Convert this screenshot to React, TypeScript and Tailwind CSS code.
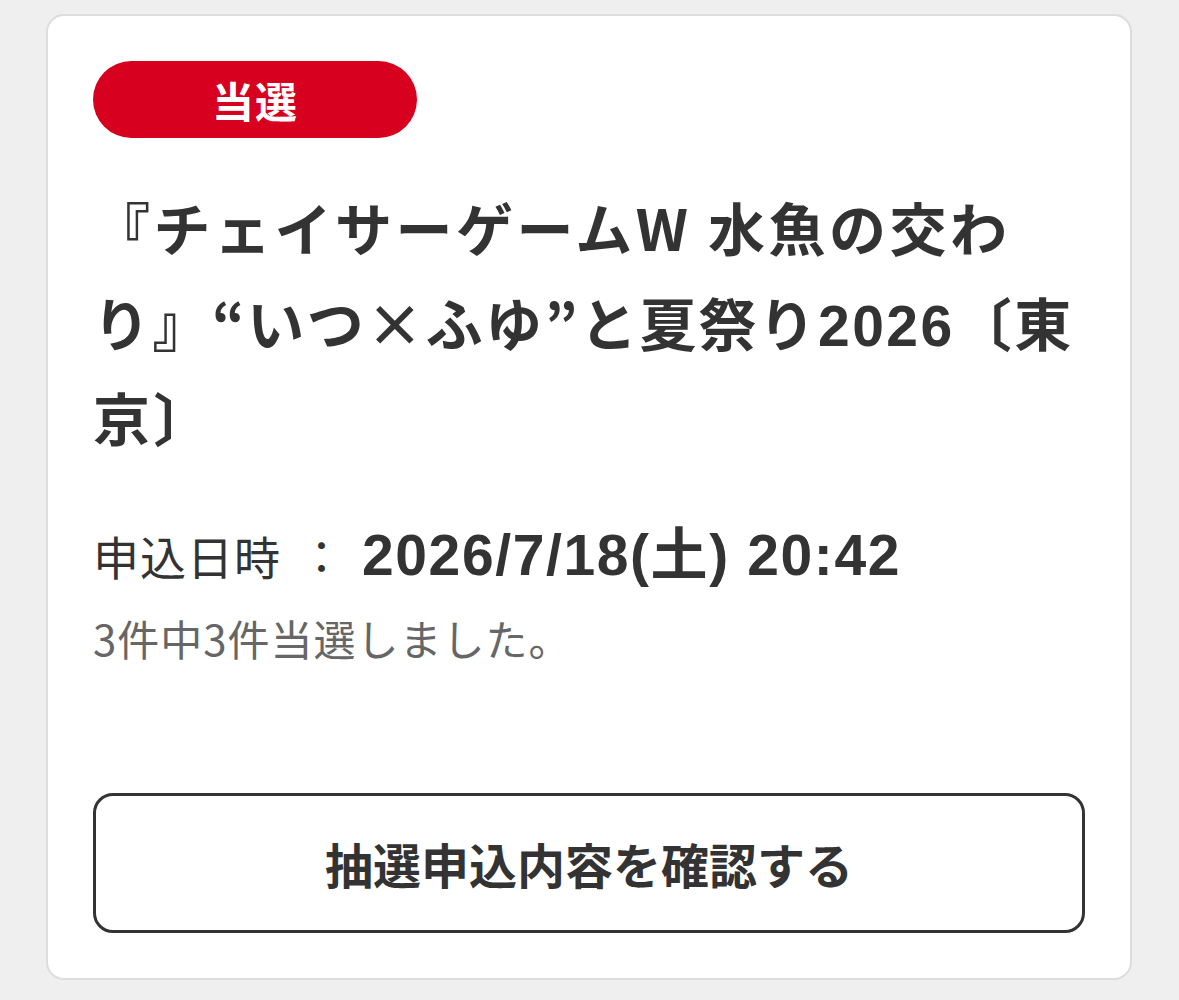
export default function App() {
  return (
    <div
      className="min-h-screen bg-[#efefef] px-[46px] pt-[14px] pb-[20px]"
      style={{ fontFamily: '"Noto Sans CJK JP", "Noto Sans", sans-serif' }}
    >
      {/* 当選カード */}
      <div className="w-[1086px] rounded-[18px] border-2 border-[#dddddd] bg-white px-[45px] pt-[45px] pb-[45px]">
        <div className="flex h-[77px] w-[324px] items-center justify-center rounded-full bg-[#d7001e]">
          <span className="text-[42px] font-bold leading-none tracking-[1px] text-white">当選</span>
        </div>

        <h2 className="mt-[41px] text-[57px] font-bold leading-[95px] tracking-[3.5px] text-[#333333]">
          『チェイサーゲームW 水魚の交わ
          <br />
          <span className="tracking-[2.5px]">
            り』“いつ×ふゆ”と夏祭り
            <span className="leading-none" style={{ fontFamily: '"Liberation Sans", sans-serif' }}>
              2026
            </span>
            〔東
          </span>
          <br />
          京〕
        </h2>

        <div className="mt-[56px] flex items-center leading-[70px] text-[#333333]">
          <span className="text-[46px] tracking-[1px]">申込日時</span>
          <span className="ml-[18px] text-[45px]">：</span>
          <span
            className="ml-[18px] text-[57px] font-bold tracking-[1.6px]"
            style={{ fontFamily: '"Liberation Sans", "Noto Sans CJK JP", sans-serif' }}
          >
            2026/7/18(土) 20:42
          </span>
        </div>

        <p className="mt-[18px] text-[42px] leading-[60px] tracking-[1px] text-[#666666]">3件中3件当選しました。</p>

        <button className="mt-[125px] flex h-[140px] w-full items-center justify-center rounded-[20px] border-[3px] border-[#333333] bg-white">
          <span className="text-[48px] font-bold text-[#333333]">抽選申込内容を確認する</span>
        </button>
      </div>
    </div>
  );
}
